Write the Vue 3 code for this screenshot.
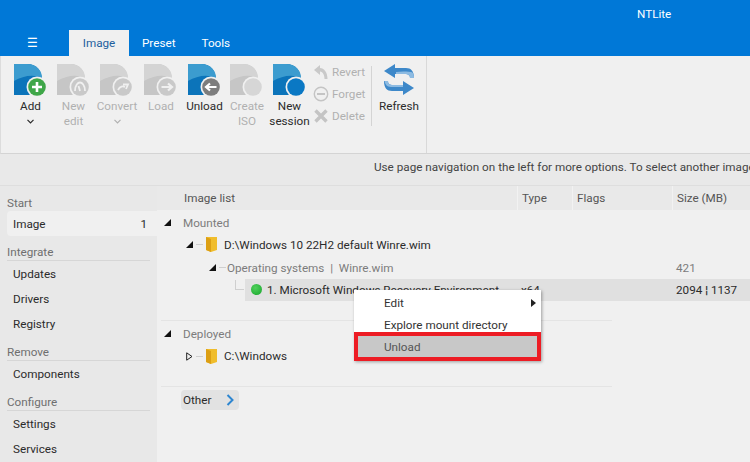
<script setup>
const tabs = ['Preset', 'Tools']

// big ribbon buttons
const bigButtons = [
  { lines: ['Add'], badge: 'add', width: 43, arrow: true },
  { lines: ['New', 'edit'], badge: 'edit', width: 43, off: true },
  { lines: ['Convert'], badge: 'convert', width: 44, off: true, arrow: true },
  { lines: ['Load'], badge: 'load', width: 44, off: true },
  { lines: ['Unload'], badge: 'unload', width: 43 },
  { lines: ['Create', 'ISO'], badge: 'iso', width: 42, off: true },
  { lines: ['New', 'session'], badge: 'session', width: 43 }
]

const sideGroups = [
  { title: 'Start', items: [{ name: 'Image', count: 1, active: true }], noLine: true },
  { title: 'Integrate', items: [{ name: 'Updates' }, { name: 'Drivers' }, { name: 'Registry' }] },
  { title: 'Remove', items: [{ name: 'Components' }] },
  { title: 'Configure', items: [{ name: 'Settings' }, { name: 'Services' }] }
]

const badgeFill = (b) => {
  if (b === 'add') return '#3fa648'
  if (b === 'unload') return '#7d7d7d'
  if (b === 'session') return '#0a78c4'
  if (b === 'iso') return '#d6d6d6'
  return '#c9c9c9'
}
</script>

<template>
  <div class="app">
    <header class="titlebar">
      <div class="title">NTLite</div>
      <nav class="tabs">
        <span class="menu-btn">☰</span>
        <span class="tab active">Image</span>
        <span v-for="t in tabs" :key="t" class="tab">{{ t }}</span>
      </nav>
    </header>

    <section class="ribbon">
      <div class="ribbon-group">
        <div
          v-for="b in bigButtons"
          :key="b.badge"
          class="big-btn"
          :class="{ off: b.off }"
          :style="{ width: b.width + 'px' }"
        >
          <svg class="big-icon" width="36" height="34" viewBox="0 0 36 34">
            <path
              d="M1 1H14C24 1 29 8 29 18V32H1Z"
              :fill="b.off ? '#c6c6c6' : '#0c74ba'"
            />
            <path
              d="M1 1H14C24 1 29 8 29 15C20 11 10 13 1 18Z"
              :fill="b.off ? '#d4d4d4' : '#3c9ccf'"
            />
            <circle cx="24" cy="24" r="10.5" fill="#f0f0f0" />
            <circle cx="24" cy="24" r="8.8" :fill="badgeFill(b.badge)" />
            <path v-if="b.badge === 'add'" d="M24 19V29M19 24H29" stroke="#fff" stroke-width="2.6" />
            <path v-if="b.badge === 'load'" d="M18.5 24H28M25 20.5L29 24L25 27.5" stroke="#f0f0f0" stroke-width="2.2" fill="none" />
            <path v-if="b.badge === 'unload'" d="M29.5 24H20M23 20.5L19 24L23 27.5" stroke="#fff" stroke-width="2.2" fill="none" />
            <path v-if="b.badge === 'edit'" d="M19 28C19 22 22 19.5 24 19.5C26 19.5 29 22 29 28M24 28L22.5 23" stroke="#f0f0f0" stroke-width="1.8" fill="none" />
            <path v-if="b.badge === 'convert'" d="M19 27C21 23 24 23 26 24M24 21.5L29 21.5L27 26" stroke="#f0f0f0" stroke-width="1.8" fill="none" />
          </svg>
          <span v-for="l in b.lines" :key="l" class="big-label">{{ l }}</span>
          <svg v-if="b.arrow" class="chev" width="7" height="5" viewBox="0 0 7 5">
            <path d="M.5 .8L3.5 3.8L6.5 .8" fill="none" stroke="currentColor" stroke-width="1.2" />
          </svg>
        </div>

        <div class="small-col">
          <div class="small-btn">
            <svg width="16" height="16" viewBox="0 0 16 16">
              <path d="M7 1L1 6L7 11V7.5C10 8 11.5 11 11.5 15H14.5C14.5 8 11 4 7 4Z" fill="#c9c9c9" />
            </svg>
            <span>Revert</span>
          </div>
          <div class="small-btn">
            <svg width="16" height="16" viewBox="0 0 16 16">
              <circle cx="8" cy="8" r="6.7" fill="none" stroke="#c4c4c4" stroke-width="1.4" />
              <path d="M4 8H12" stroke="#c4c4c4" stroke-width="2" />
            </svg>
            <span>Forget</span>
          </div>
          <div class="small-btn">
            <svg width="16" height="16" viewBox="0 0 16 16">
              <path d="M2.5 2.5L13.5 13.5M13.5 2.5L2.5 13.5" stroke="#c4c4c4" stroke-width="3.4" />
            </svg>
            <span>Delete</span>
          </div>
        </div>

        <div class="ribbon-sep"></div>

        <div class="big-btn refresh">
          <svg class="big-icon" width="34" height="34" viewBox="0 0 34 34">
            <path d="M2 8L13 1V5H24C29 5 32 8 32 15H28C28 12 26 11 23 11H13V15Z" fill="#3d88c9" />
            <path d="M32 25L21 32V28H10C5 28 2 25 2 18H6C6 21 8 22 11 22H21V18Z" fill="#3d88c9" />
            <path d="M14 11H23C26 11 28 12 28 15H32C32 13 31.5 11 30.5 9.5C28 8.5 20 8 14 9Z" fill="#8dbbe2" />
            <path d="M6 18C6 21 8 22 11 22H21V24H9C5 24 3 21 2.5 18Z" fill="#8dbbe2" />
          </svg>
          <span class="big-label">Refresh</span>
        </div>
      </div>
    </section>

    <div class="hint">Use page navigation on the left for more options. To select another image</div>

    <div class="body">
      <aside class="sidebar">
        <div v-for="g in sideGroups" :key="g.title">
          <div class="side-title" :class="{ lined: !g.noLine }"><span>{{ g.title }}</span></div>
          <div v-for="i in g.items" :key="i.name" class="side-item" :class="{ active: i.active }">
            <span>{{ i.name }}</span>
            <span v-if="i.count">{{ i.count }}</span>
          </div>
        </div>
      </aside>

      <main class="main">
        <div class="list-head">
          <div class="col-name">Image list</div>
          <div class="col-type">Type</div>
          <div class="col-flags">Flags</div>
          <div class="col-size">Size (MB)</div>
        </div>

        <div class="row lvl0 muted">
          <svg class="twisty" width="7" height="7" viewBox="0 0 7 7"><path d="M7 0V7H0Z" fill="#111" /></svg>
          <span>Mounted</span>
        </div>
        <div class="row lvl1">
          <svg class="twisty" width="7" height="7" viewBox="0 0 7 7"><path d="M7 0V7H0Z" fill="#111" /></svg>
          <i class="dash"></i>
          <svg class="folder" width="13" height="17" viewBox="0 0 13 17">
            <path d="M1 1H12V14L6 16L1 14Z" fill="#f0bd2c" />
            <path d="M1 1L6 3V16L1 14Z" fill="#dc9f14" />
          </svg>
          <span>D:\Windows 10 22H2 default Winre.wim</span>
        </div>
        <div class="row lvl2 muted">
          <svg class="twisty" width="7" height="7" viewBox="0 0 7 7"><path d="M7 0V7H0Z" fill="#111" /></svg>
          <i class="dash"></i>
          <span class="grow">Operating systems&nbsp; |&nbsp; Winre.wim</span>
          <span>421</span>
        </div>
        <div class="row entry">
          <i class="elbow"></i>
          <div class="entry-bar">
            <span class="dot"></span>
            <span class="entry-name">1. Microsoft Windows Recovery Environment</span>
            <span class="entry-type">x64</span>
            <span>2094 ¦ 1137</span>
          </div>
        </div>

        <div class="sep first"></div>

        <div class="row lvl0 muted">
          <svg class="twisty" width="7" height="7" viewBox="0 0 7 7"><path d="M7 0V7H0Z" fill="#111" /></svg>
          <span>Deployed</span>
        </div>
        <div class="row lvl1 deployed">
          <svg class="twisty" width="7" height="9" viewBox="0 0 7 9"><path d="M.7 .8L6 4.5L.7 8.2Z" fill="none" stroke="#222" /></svg>
          <i class="dash"></i>
          <svg class="folder" width="13" height="17" viewBox="0 0 13 17">
            <path d="M1 1H12V14L6 16L1 14Z" fill="#f0bd2c" />
            <path d="M1 1L6 3V16L1 14Z" fill="#dc9f14" />
          </svg>
          <span>C:\Windows</span>
        </div>

        <div class="sep second"></div>

        <div class="other">
          <span>Other</span>
          <svg width="8" height="12" viewBox="0 0 8 12"><path d="M1.5 1L6.5 6L1.5 11" fill="none" stroke="#2e86d0" stroke-width="2" /></svg>
        </div>

        <div class="context-menu">
          <div class="menu-item">
            <span>Edit</span>
            <svg width="5" height="8" viewBox="0 0 5 8"><path d="M0 0L5 4L0 8Z" fill="#222" /></svg>
          </div>
          <div class="menu-item">Explore mount directory</div>
          <div class="menu-item marked">Unload</div>
        </div>
      </main>
    </div>
  </div>
</template>

<style>
html, body {
  margin: 0;
  overflow: hidden;
}
</style>

<style scoped>
.app {
  width: 750px;
  height: 462px;
  overflow: hidden;
  background: #f0f0f0;
  font-family: Roboto, "Noto Sans", sans-serif;
  font-size: 11.7px;
  color: #2b2b2b;
  display: flex;
  flex-direction: column;
}
.titlebar {
  height: 56px;
  flex: none;
  background: #0078d7;
  color: #fff;
  position: relative;
  display: flex;
  flex-direction: column;
  justify-content: flex-end;
}
.title {
  position: absolute;
  top: 7px;
  left: 637px;
}
.tabs {
  display: flex;
  align-items: stretch;
  height: 26px;
  padding-left: 25px;
}
.menu-btn {
  width: 44px;
  font-size: 12px;
  line-height: 26px;
  padding-left: 2px;
  box-sizing: border-box;
}
.tab {
  line-height: 27px;
  padding: 0 13px;
}
.tab.active {
  width: 60px;
  box-sizing: border-box;
  text-align: center;
  padding: 0;
  background: #f0f0f0;
  color: #1f5f9e;
}
.ribbon {
  height: 98px;
  flex: none;
  box-sizing: border-box;
  padding-left: 8px;
  background: #f0f0f0;
  border-bottom: 1px solid #d4d4d4;
  border-left: 1px solid #dcdcdc;
}
.ribbon-group {
  display: flex;
  width: 417px;
  height: 97px;
  border-right: 1px solid #d9d9d9;
}
.big-btn {
  display: flex;
  flex-direction: column;
  align-items: center;
  padding-top: 7px;
  line-height: 15px;
  white-space: nowrap;
  color: #2b2b2b;
}
.big-btn.off {
  color: #b0b0b0;
}
.big-icon {
  margin-bottom: 2px;
  flex: none;
}
.chev {
  margin-top: 5px;
}
.small-col {
  width: 56px;
  margin-left: 2px;
  padding-top: 5px;
  color: #b0b0b0;
}
.small-btn {
  height: 22px;
  display: flex;
  align-items: center;
  gap: 3px;
}
.ribbon-sep {
  width: 1px;
  height: 60px;
  margin: 10px 3px 0 2px;
  background: #d4d4d4;
}
.refresh {
  width: 48px;
}
.hint {
  height: 32px;
  flex: none;
  box-sizing: border-box;
  padding-left: 374px;
  line-height: 26px;
  white-space: nowrap;
  overflow: hidden;
  background: #e9e9e9;
  border-bottom: 1px solid #dedede;
  color: #444;
}
.body {
  flex: 1;
  display: flex;
  min-height: 0;
}
.sidebar {
  width: 157px;
  flex: none;
  background: #e8e8e8;
  padding-left: 7px;
  box-sizing: border-box;
}
.side-title {
  height: 25px;
  margin-right: 7px;
  display: flex;
  align-items: flex-end;
  color: #6f6f6f;
  box-sizing: border-box;
  line-height: 15px;
}
.side-title.lined {
  border-bottom: 1px solid #d6d6d6;
}
.side-item {
  height: 25px;
  box-sizing: border-box;
  padding: 1px 10px 0 6px;
  display: flex;
  justify-content: space-between;
  align-items: center;
}
.side-item.active {
  background: #f0f0f0;
  border-radius: 4px 0 0 4px;
}
.main {
  flex: 1;
  position: relative;
  min-width: 0;
  overflow: hidden;
}
.list-head {
  height: 24px;
  display: flex;
  align-items: center;
  background: #e9e9e9;
  color: #555;
  margin-bottom: 1px;
}
.list-head > div {
  height: 100%;
  line-height: 25px;
  box-sizing: border-box;
  padding-left: 4px;
  border-right: 1px solid #f2f2f2;
}
.list-head .col-name {
  width: 361px;
  padding-left: 27px;
}
.list-head .col-type {
  width: 55px;
}
.list-head .col-flags {
  width: 100px;
}
.list-head .col-size {
  border-right: 0;
}
.row {
  height: 22.5px;
  display: flex;
  align-items: center;
  white-space: nowrap;
}
.row > span {
  padding-top: 1px;
}
.row.deployed > span {
  padding-top: 0;
}
.muted {
  color: #7c7c7c;
}
.lvl0 {
  padding-left: 7px;
}
.lvl0 .twisty {
  margin-right: 12px;
}
.lvl1 {
  padding-left: 29px;
}
.lvl1 .folder {
  margin-right: 6px;
}
.lvl1 .dash {
  margin: 0 2px 0 3px;
}
.lvl2 {
  padding-left: 52px;
}
.lvl2 .dash {
  margin: 0 1px 0 3px;
}
.grow {
  width: 449px;
  flex: none;
}
.dash {
  width: 7px;
  height: 1px;
  background: #cfcfcf;
  flex: none;
}
.folder {
  flex: none;
}
.twisty {
  flex: none;
}
.entry {
  padding-left: 78px;
  height: 22px;
}
.elbow {
  width: 9px;
  height: 10px;
  margin: -10px 1px 0 0;
  border-left: 1px solid #cfcfcf;
  border-bottom: 1px solid #cfcfcf;
  flex: none;
  box-sizing: border-box;
}
.entry-bar {
  flex: 1;
  height: 22px;
  display: flex;
  align-items: center;
  background: #e0e0e0;
  padding-left: 6px;
}
.dot {
  width: 11px;
  height: 11px;
  border-radius: 50%;
  background: radial-gradient(circle at 40% 35%, #4fd05a, #17a52c);
  margin-right: 5px;
  flex: none;
}
.entry-name {
  width: 254px;
  flex: none;
}
.entry-type {
  width: 155px;
  flex: none;
}
.sep {
  height: 1px;
  width: 451px;
  margin-left: 4px;
  background: #e4e4e4;
}
.sep.first {
  margin-top: 19px;
  margin-bottom: 2px;
}
.sep.second {
  margin-top: 18px;
  margin-bottom: 3px;
}
.other {
  margin-left: 24px;
  width: 58px;
  height: 20px;
  box-sizing: border-box;
  padding: 0 5px 0 2px;
  display: flex;
  align-items: center;
  justify-content: space-between;
  background: #e2e2e2;
  border-radius: 4px;
}
.context-menu {
  position: absolute;
  left: 197px;
  top: 104px;
  width: 187px;
  height: 71px;
  box-sizing: border-box;
  padding-top: 1px;
  background: #fff;
  box-shadow: 1px 1px 3px rgba(0, 0, 0, 0.35);
}
.menu-item {
  height: 22px;
  box-sizing: border-box;
  padding: 1px 5px 0 30px;
  display: flex;
  align-items: center;
  justify-content: space-between;
  color: #333;
}
.menu-item.marked {
  height: 29px;
  margin-top: -3px;
  padding: 0 0 0 26px;
  background: #c8c8c8;
  border: 4px solid #ed1c24;
  color: #555;
}
</style>
